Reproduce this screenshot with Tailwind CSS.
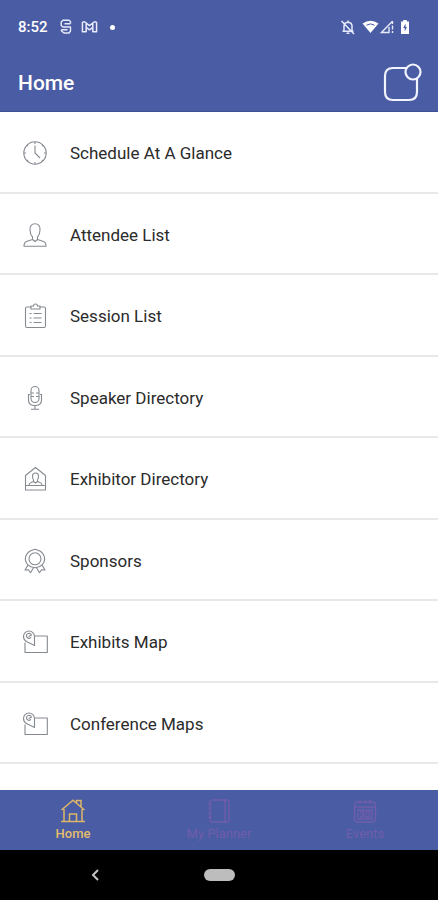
<!DOCTYPE html>
<html lang="en">
<head>
<meta charset="utf-8">
<meta name="viewport" content="width=device-width, initial-scale=1">
<title>Home</title>
<script src="https://cdn.jsdelivr.net/npm/@tailwindcss/browser@4"></script>
</head>
<body class="flex min-h-screen flex-col bg-white font-[Roboto,sans-serif] text-[#2b2b2b]">
<header class="border-b border-[#3f5093] bg-[#4a5ca3] text-white">
  <div class="flex h-[54px] items-center justify-between pr-7 pl-[18px]">
    <div class="flex items-center">
      <span class="w-[42px] text-[15px] leading-5 font-medium">8:52</span>
      <svg class="h-4 w-3" viewBox="0 0 12 16" fill="none" stroke="#e6eafa" stroke-width="1.400" stroke-linejoin="round"><path d="M10.500 4.500V2.500L9 1.300H3L1.200 3v3.500L3 8h7.500V12L9 14H4L1.500 12V10.500M10.500 4.800H4.500M1.500 10.800H7.500"/></svg>
      <svg class="ml-[9px] h-4 w-[17px]" viewBox="0 0 18 16" fill="none" stroke="#e6eafa" stroke-width="1.600" stroke-linejoin="round"><path d="M1.500 3.200Q3 1.800 4.500 3L9 6.500 13.500 3Q15 1.800 16.500 3.200V13H12.500V8.500L9 11 5.500 8.500V13H1.500ZM5.500 8.500V4M12.500 8.500V4"/></svg>
      <span class="ml-3 size-[5px] rounded-full bg-white"></span>
    </div>
    <div class="flex items-center">
      <svg class="size-4" viewBox="0 0 16 16" fill="none" stroke="#e6eafa" stroke-width="1.500"><path d="M4 12V7Q4 3.500 8 3.200 12 3.500 12 7v5M2.500 12.200h11M8 1.500v2M1.500 2l12.500 13"/><path d="M6.500 14.200h3"/></svg>
      <svg class="ml-[6px] h-4 w-[17px]" viewBox="0 0 17 16"><path fill="#fff" d="M.500 4.500Q8.500-.800 16.500 4.500L8.500 14Z"/><path d="M4.500 6.200Q8.500 3.500 12.500 6.200" fill="none" stroke="#4a5ca3" stroke-width="1"/></svg>
      <svg class="ml-px h-4 w-[14px]" viewBox="0 0 14 16" fill="none" stroke="#e6eafa" stroke-width="1.400"><path d="M12.500 2.200L1.500 13.500h7.500V8M12.500 2v3M12.500 6.500v4M12.500 12v2"/></svg>
      <svg class="ml-[6px] h-4 w-[10px]" viewBox="0 0 10 16"><path fill="#fff" d="M3.200 1h3.600v1.500H9V15H1V2.500h2.200Z"/><path fill="#4a5ca3" d="M5.600 4.500L3.200 9h1.500v3.500L7 8H5.600Z"/></svg>
    </div>
  </div>
  <div class="flex h-[57px] items-center justify-between pr-4 pl-[18px]">
    <h1 class="text-[21px] leading-6 font-medium">Home</h1>
    <button type="button" aria-label="Notifications">
      <svg class="h-10 w-[39px]" viewBox="0 0 39 40" fill="none" stroke="#f2f4ff" stroke-width="2.200"><path d="M23 5H10Q2 5 2 13V29Q2 37 10 37H26Q34 37 34 29V16"/><circle cx="30" cy="9" r="7.500"/></svg>
    </button>
  </div>
</header>

<main class="flex-1">
  <ul>
    <li class="h-[82px] border-b-2 border-[#e8e8e8]"><a href="#schedule" class="flex h-full items-center pt-0.5 pl-[22px]">
      <svg class="size-[26px]" viewBox="0 0 26 26" fill="none" stroke="#858a90" stroke-width="1.100"><circle cx="13" cy="13" r="11.200"/><path d="M13 5.500V13l5 5M13 2v2M13 22v2M2 13h2M22 13h2M5 5l1 1M21 5l-1 1M5 21l1-1M21 21l-1-1"/></svg>
      <span class="ml-[22px] text-[17px] leading-6">Schedule At A Glance</span></a></li>
    <li class="h-[81px] border-b-2 border-[#e8e8e8]"><a href="#attendees" class="flex h-full items-center pt-0.5 pl-[22px]">
      <svg class="size-[26px]" viewBox="0 0 26 26" fill="none" stroke="#858a90" stroke-width="1.100" stroke-linejoin="round"><path d="M10.500 15C8.500 13 8 10.500 8 8 7.500 4 10 1.800 13 1.800S18.500 4 18 8c0 2.500-.500 5-2.500 7v2.500l6 2c2 .700 2.500 2 2.500 4.700H2c0-2.700.500-4 2.500-4.700l6-2ZM10.500 17.500l2.500 2 2.500-2"/></svg>
      <span class="ml-[22px] text-[17px] leading-6">Attendee List</span></a></li>
    <li class="h-[82px] border-b-2 border-[#e8e8e8]"><a href="#sessions" class="flex h-full items-center pt-0.5 pl-[22px]">
      <svg class="size-[26px]" viewBox="0 0 26 26" fill="none" stroke="#858a90" stroke-width="1.100" stroke-linejoin="round"><path d="M9 4H5Q3.500 4 3.500 5.500V23Q3.500 24.500 5 24.500H22Q23.500 24.500 23.500 23V5.500Q23.500 4 22 4H18M9 6V3h2.500Q11.500 1 13.500 1T15.500 3H18V6Z"/><path d="M7.500 10.500h2M11.500 10.500h8M7.500 15h2M11.500 15h8M7.500 19.500h2M11.500 19.500h8"/></svg>
      <span class="ml-[22px] text-[17px] leading-6">Session List</span></a></li>
    <li class="h-[81px] border-b-2 border-[#e8e8e8]"><a href="#speakers" class="flex h-full items-center pt-0.5 pl-[22px]">
      <svg class="size-[26px]" viewBox="0 0 26 26" fill="none" stroke="#858a90" stroke-width="1.100"><rect x="9" y="1.500" width="8" height="16" rx="4"/><path d="M9 8h3M14 8h3M9 11.500h3M14 11.500h3M8 9.500H6.500V15Q6.500 20.500 13 20.500T19.500 15V9.500H18M13 20.500V24M9 24.300h8"/></svg>
      <span class="ml-[22px] text-[17px] leading-6">Speaker Directory</span></a></li>
    <li class="h-[82px] border-b-2 border-[#e8e8e8]"><a href="#exhibitors" class="flex h-full items-center pt-0.5 pl-[22px]">
      <svg class="size-[26px]" viewBox="0 0 26 26" fill="none" stroke="#858a90" stroke-width="1.100" stroke-linejoin="round"><path d="M3.500 24V9.500L13.500 1.500l10 8V24ZM3.500 19.500h20"/><path d="M7 19.500q0-2.500 2-3l2.500-1V14Q10.500 12.500 10.500 10 10.500 7 13.500 7t3 3Q16.500 12.500 15.500 14v1.500l2.500 1q2 .500 2 3M11.500 15.500l2 1.500 2-1.500"/></svg>
      <span class="ml-[22px] text-[17px] leading-6">Exhibitor Directory</span></a></li>
    <li class="h-[81px] border-b-2 border-[#e8e8e8]"><a href="#sponsors" class="flex h-full items-center pt-0.5 pl-[22px]">
      <svg class="size-[26px]" viewBox="0 0 26 26" fill="none" stroke="#858a90" stroke-width="1.100" stroke-linejoin="round"><path d="M13 1.300l3 .900 2.800 1.300L21 5.800l1.300 2.700.400 3-.900 3-1.800 2.500-2.800 1.700-4.200 1-4.200-1L6 17l-1.800-2.500-.900-3 .400-3L5 5.800l2.200-2.300L10 2.200Z"/><circle cx="13" cy="10.800" r="6"/><path d="M6 17l-3 5 3.500-.200L8.500 24.700l3-5M20 17l3 5-3.500-.200-2 2.900-3-5"/></svg>
      <span class="ml-[22px] text-[17px] leading-6">Sponsors</span></a></li>
    <li class="h-[82px] border-b-2 border-[#e8e8e8]"><a href="#exhibits-map" class="flex h-full items-center pt-0.5 pl-[22px]">
      <svg class="size-[26px]" viewBox="0 0 26 26" fill="none" stroke="#858a90" stroke-width="1.100" stroke-linejoin="round"><path d="M13 7h12.300v16.500H3V13.500"/><path d="M12.500 7.500V16.500L4.500 12.500C2.500 11.500 1.500 9.500 1.500 7.500 1.500 4.300 4 2 7 2s5.500 2.300 5.500 5.500Z"/><path d="M9 8.300A2.500 2.500 0 1 1 9.400 6.300L6.500 7.500"/></svg>
      <span class="ml-[22px] text-[17px] leading-6">Exhibits Map</span></a></li>
    <li class="h-[81px] border-b-2 border-[#e8e8e8]"><a href="#conference-maps" class="flex h-full items-center pt-0.5 pl-[22px]">
      <svg class="size-[26px]" viewBox="0 0 26 26" fill="none" stroke="#858a90" stroke-width="1.100" stroke-linejoin="round"><path d="M13 7h12.300v16.500H3V13.500"/><path d="M12.500 7.500V16.500L4.500 12.500C2.500 11.500 1.500 9.500 1.500 7.500 1.500 4.300 4 2 7 2s5.500 2.300 5.500 5.500Z"/><path d="M9 8.300A2.500 2.500 0 1 1 9.400 6.300L6.500 7.500"/></svg>
      <span class="ml-[22px] text-[17px] leading-6">Conference Maps</span></a></li>
  </ul>
</main>

<footer>
  <nav class="grid h-[60px] grid-cols-3 bg-[#4a5ca3] text-[13px] leading-4 text-[#705dab]">
    <a href="#home" class="flex flex-col items-center pt-2 font-medium text-[#e3bd6b]">
      <svg class="size-[26px]" viewBox="0 0 26 26" fill="none" stroke="#dcb568" stroke-width="1.500"><path d="M1.500 12L13 2.200 24.500 12M4 11v12.300M22 11v12.300M1 23.500h24M9.500 23V16h7v7M16.500 5V2.500h4.500V8.500"/></svg>
      <span class="mt-0.5">Home</span></a>
    <a href="#planner" class="flex flex-col items-center pt-2">
      <svg class="size-[26px]" viewBox="0 0 26 26" fill="none" stroke="currentColor" stroke-width="1.300"><rect x="4" y="2" width="19" height="22" rx="1.500"/><path d="M19 2v22M2.500 6h3M2.500 10.500h3M2.500 15h3M2.500 19.500h3"/></svg>
      <span class="mt-0.5">My Planner</span></a>
    <a href="#events" class="flex flex-col items-center pt-2">
      <svg class="size-[26px]" viewBox="0 0 26 26" fill="none" stroke="currentColor" stroke-width="1.300"><rect x="2.500" y="4" width="21" height="20" rx="3"/><path d="M2.500 9h21M8 2v4M13 2v4M18 2v4M6 12h14v9H6Z"/><path d="M8 14h3.500v5H8M8.500 16.500h3M14 14h3.500v5H14Z"/></svg>
      <span class="mt-0.5">Events</span></a>
  </nav>
  <div class="grid h-[50px] grid-cols-3 items-center bg-black">
    <button type="button" aria-label="Back" class="mr-[47px] justify-self-end"><svg class="h-3 w-2" viewBox="0 0 8 12" fill="none" stroke="#c4c4c4" stroke-width="2"><path d="M7 1L2 6l5 5"/></svg></button>
    <button type="button" aria-label="System home" class="h-3 w-[31px] justify-self-center rounded-full bg-[#bdbdbd]"></button>
  </div>
</footer>
</body>
</html>
